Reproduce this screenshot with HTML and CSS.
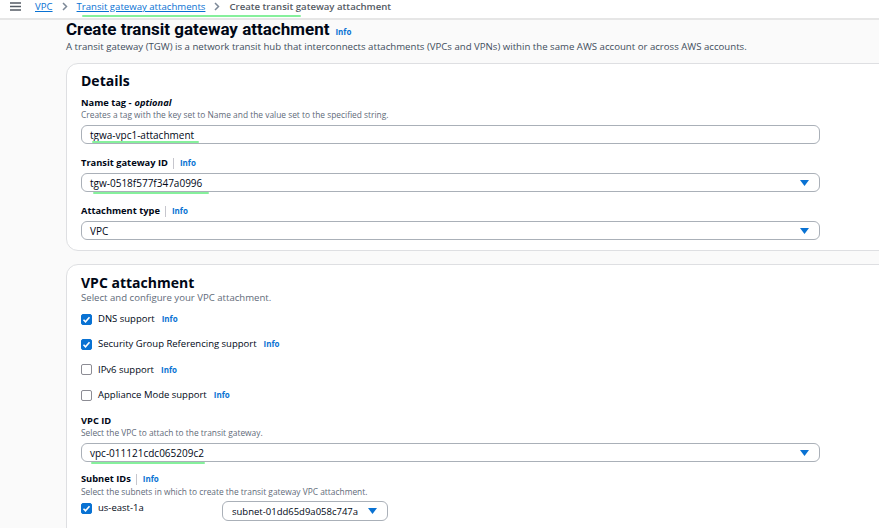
FILE: index.html
```html
<!DOCTYPE html>
<html lang="en">
<head>
<meta charset="utf-8">
<title>Create transit gateway attachment</title>
<link rel="stylesheet" href="styles.css">
</head>
<body>
<header class="topbar">
  <svg class="menu" width="11" height="9" viewBox="0 0 11 9"><path d="M0 1h11M0 4.5h11M0 8h11" stroke="#545b64" stroke-width="1.6"/></svg>
  <nav class="crumbs">
    <a class="crumb-link">VPC</a>
    <svg class="chev" width="6" height="9" viewBox="0 0 6 9"><path d="M1 1l3.5 3.5L1 8" fill="none" stroke="#7d8998" stroke-width="1.5"/></svg>
    <a class="crumb-link">Transit gateway attachments</a>
    <svg class="chev" width="6" height="9" viewBox="0 0 6 9"><path d="M1 1l3.5 3.5L1 8" fill="none" stroke="#7d8998" stroke-width="1.5"/></svg>
    <span class="crumb-current">Create transit gateway attachment</span>
  </nav>
  <span class="mark mark-crumb"></span>
</header>

<main class="page">
  <div class="title-row">
    <h1 class="title">Create transit gateway attachment</h1>
    <a class="info">Info</a>
  </div>
  <p class="lead">A transit gateway (TGW) is a network transit hub that interconnects attachments (VPCs and VPNs) within the same AWS account or across AWS accounts.</p>

  <section class="panel panel-details">
    <h2 class="panel-title">Details</h2>
    <div class="field field-name">
      <div class="label">Name tag - <i>optional</i></div>
      <div class="hint">Creates a tag with the key set to Name and the value set to the specified string.</div>
      <div class="input">tgwa-vpc1-attachment</div>
      <span class="mark mark-name"></span>
    </div>
    <div class="field">
      <div class="label">Transit gateway ID <span class="sep"></span><a class="info">Info</a></div>
      <div class="input select">tgw-0518f577f347a0996<svg class="caret" width="9" height="6" viewBox="0 0 9 6"><path d="M0 0h9L4.5 6z" fill="#0972d3"/></svg></div>
      <span class="mark mark-tgw"></span>
    </div>
    <div class="field">
      <div class="label">Attachment type <span class="sep"></span><a class="info">Info</a></div>
      <div class="input select">VPC<svg class="caret" width="9" height="6" viewBox="0 0 9 6"><path d="M0 0h9L4.5 6z" fill="#0972d3"/></svg></div>
    </div>
  </section>

  <section class="panel panel-vpc">
    <h2 class="panel-title">VPC attachment</h2>
    <div class="hint hint-lead">Select and configure your VPC attachment.</div>
    <ul class="checks">
      <li class="check"><span class="box on"><svg width="11" height="11" viewBox="0 0 11 11"><path d="M2.5 5.8l2 2 4-4.6" fill="none" stroke="#fff" stroke-width="1.6"/></svg></span>DNS support <a class="info">Info</a></li>
      <li class="check"><span class="box on"><svg width="11" height="11" viewBox="0 0 11 11"><path d="M2.5 5.8l2 2 4-4.6" fill="none" stroke="#fff" stroke-width="1.6"/></svg></span>Security Group Referencing support <a class="info">Info</a></li>
      <li class="check"><span class="box"></span>IPv6 support <a class="info">Info</a></li>
      <li class="check"><span class="box"></span>Appliance Mode support <a class="info">Info</a></li>
    </ul>
    <div class="field field-vpcid">
      <div class="label">VPC ID</div>
      <div class="hint">Select the VPC to attach to the transit gateway.</div>
      <div class="input select">vpc-011121cdc065209c2<svg class="caret" width="9" height="6" viewBox="0 0 9 6"><path d="M0 0h9L4.5 6z" fill="#0972d3"/></svg></div>
      <span class="mark mark-vpc"></span>
    </div>
    <div class="field field-subnets">
      <div class="label">Subnet IDs <span class="sep"></span><a class="info">Info</a></div>
      <div class="hint hint-subnets">Select the subnets in which to create the transit gateway VPC attachment.</div>
      <div class="subnet-row">
        <span class="check check-az"><span class="box on"><svg width="11" height="11" viewBox="0 0 11 11"><path d="M2.5 5.8l2 2 4-4.6" fill="none" stroke="#fff" stroke-width="1.6"/></svg></span>us-east-1a</span>
        <span class="subnet-select">subnet-01dd65d9a058c747a<svg class="caret-s" width="9" height="6" viewBox="0 0 9 6"><path d="M0 0h9L4.5 6z" fill="#0972d3"/></svg></span>
      </div>
    </div>
  </section>
</main>
</body>
</html>
```

FILE: styles.css
```css
* { box-sizing: border-box; }
html, body { margin: 0; padding: 0; }
body {
  width: 879px;
  height: 528px;
  overflow: hidden;
  background: #fafafa;
  font-family: "Open Sans", "Liberation Sans", sans-serif;
  color: #000716;
  font-size: 10px;
}
a { cursor: pointer; }

.topbar {
  position: relative;
  height: 20px;
  background: #fff;
  border-bottom: 2px solid #e6e6e6;
  display: flex;
  align-items: flex-start;
  padding-left: 10px;
}
.menu { margin-top: 2px; }
.crumbs {
  display: flex;
  align-items: center;
  gap: 9px;
  margin-left: 14px;
  font-size: 9.6px;
  line-height: 13px;
}
.crumb-link {
  color: #0972d3;
  text-decoration: underline;
  text-underline-offset: 1px;
}
.crumb-current { color: #545b64; font-weight: 600; }

.mark {
  position: absolute;
  height: 2px;
  background: #86f09c;
  border-radius: 1px;
}
.mark-crumb { left: 82px; top: 15px; width: 219px; }

.page { padding-left: 66px; }
.title-row {
  display: flex;
  align-items: baseline;
  gap: 6px;
  margin-top: -2px;
  height: 22px;
}
.title {
  margin: 0;
  font-family: Roboto, "Open Sans", sans-serif;
  font-size: 17px;
  line-height: 22px;
  font-weight: 700;
}
.info {
  color: #0972d3;
  font-weight: 700;
  font-size: 8px;
}
.lead {
  margin: 0;
  font-size: 9.65px;
  line-height: 14px;
  color: #414d5c;
}

.panel {
  width: 900px;
  background: #fff;
  border: 1px solid #dedfe2;
  border-radius: 12px;
  padding: 8px 14px 10px;
}
.panel-details { margin-top: 9px; }
.panel-vpc { margin-top: 13px; padding-top: 9px; height: 290px; }
.panel-title {
  margin: 0;
  font-size: 14px;
  line-height: 18px;
  font-weight: 700;
}
.field { position: relative; margin-top: 13px; }
.field-name { margin-top: 7px; }
.label {
  font-weight: 700;
  font-size: 9.3px;
  line-height: 12px;
  display: flex;
  align-items: center;
}
.label i { font-weight: 700; margin-left: 3px; }
.sep {
  display: inline-block;
  width: 1px;
  height: 11px;
  background: #c6c6cd;
  margin: 0 6px 0 5px;
}
.hint {
  font-size: 8.4px;
  line-height: 11px;
  color: #5f6b7a;
}
.input {
  margin-top: 5px;
  width: 739px;
  height: 19px;
  border: 1px solid #aab0b8;
  border-radius: 6px;
  padding-left: 8px;
  display: flex;
  align-items: center;
  font-size: 10px;
  color: #000716;
}
.label + .input { margin-top: 4px; }
.select { justify-content: space-between; padding-right: 10px; }
.caret { margin-top: 1px; }
.mark-name { left: 11px; top: 44px; width: 107px; }
.mark-tgw { left: 12px; top: 35px; width: 116px; }
.mark-vpc { left: 10px; top: 47px; width: 114px; }

.hint-lead { font-size: 9.6px; line-height: 12px; }
.checks {
  list-style: none;
  margin: 8px 0 0;
  padding: 0;
  display: flex;
  flex-direction: column;
  gap: 11.4px;
}
.check {
  display: flex;
  align-items: center;
  font-size: 9.5px;
  line-height: 14px;
  gap: 6px;
}
.check .info { margin-left: 1px; }
.box {
  width: 11px;
  height: 11px;
  border: 1px solid #8c8c94;
  border-radius: 2px;
  flex: none;
  position: relative;
  background: #fff;
}
.box.on { background: #0972d3; border-color: #0972d3; }
.box svg { position: absolute; left: -1px; top: -1px; }

.field-vpcid { margin-top: 13px; }
.field-subnets { margin-top: 11px; }
.hint-subnets { margin-top: 1px; }
.subnet-row {
  display: flex;
  align-items: flex-start;
}
.check-az { width: 141px; margin-top: 4px; }
.subnet-select {
  width: 166px;
  height: 20px;
  border: 1px solid #aab0b8;
  border-radius: 6px;
  display: flex;
  align-items: center;
  justify-content: space-between;
  padding: 0 10px 0 9px;
  font-size: 9.5px;
  margin-top: 4px;
}
```
